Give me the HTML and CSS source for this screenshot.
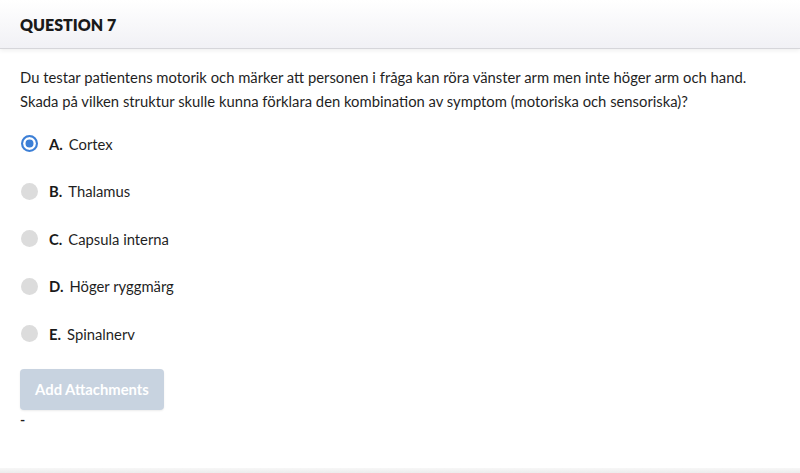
FILE: index.html
```html
<!DOCTYPE html>
<html lang="sv">
<head>
<meta charset="utf-8">
<link rel="stylesheet" href="styles.css">
</head>
<body>
<div class="page">
  <header class="qhead">
    <h1 class="qtitle">QUESTION 7</h1>
  </header>
  <main class="qbody">
    <p class="qtext">Du testar patientens motorik och märker att personen i fråga kan röra vänster arm men inte höger arm och hand.<br>Skada på vilken struktur skulle kunna förklara den kombination av symptom (motoriska och sensoriska)?</p>
    <ul class="options">
      <li class="option selected"><span class="radio"></span><b class="letter">A.</b><span class="otext">Cortex</span></li>
      <li class="option"><span class="radio"></span><b class="letter">B.</b><span class="otext">Thalamus</span></li>
      <li class="option"><span class="radio"></span><b class="letter">C.</b><span class="otext">Capsula interna</span></li>
      <li class="option"><span class="radio"></span><b class="letter">D.</b><span class="otext">Höger ryggmärg</span></li>
      <li class="option"><span class="radio"></span><b class="letter">E.</b><span class="otext">Spinalnerv</span></li>
    </ul>
    <button class="attach" type="button">Add Attachments</button>
    <div class="dash">-</div>
  </main>
  <div class="footer-line"></div>
</div>
</body>
</html>
```

FILE: styles.css
```css
html, body {
  margin: 0;
  padding: 0;
  background: #ffffff;
}
body {
  font-family: Lato, "Open Sans", sans-serif;
  color: #1f1f1f;
}
.page {
  width: 800px;
  height: 473px;
  display: flex;
  flex-direction: column;
  overflow: hidden;
}
.qhead {
  height: 48px;
  flex: none;
  display: flex;
  align-items: center;
  padding: 0 20px;
  background: linear-gradient(to bottom, #ffffff 0%, #f1f1f5 100%);
  border-bottom: 1px solid #d6d6da;
  box-shadow: 0 2px 4px rgba(0,0,0,0.06);
}
.qtitle {
  margin: 0;
  font-size: 16px;
  font-weight: 800;
  color: #1a1a1a;
  letter-spacing: 0;
}
.qbody {
  flex: 1;
  padding: 16px 20px 0;
}
.qtext {
  margin: 0;
  font-size: 14.8px;
  line-height: 24px;
  color: #1f1f1f;
}
.options {
  list-style: none;
  margin: 20px 0 0;
  padding: 0;
  display: flex;
  flex-direction: column;
  gap: 26px;
}
.option {
  display: flex;
  align-items: center;
  height: 21.5px;
  font-size: 14.8px;
}
.radio {
  width: 17px;
  height: 17px;
  border-radius: 50%;
  background: #dcdcdc;
  margin-left: 1px;
  margin-right: 11px;
  box-sizing: border-box;
  flex: none;
}
.option.selected .radio {
  background: #ffffff;
  border: 2.5px solid #3c7fd6;
  box-shadow: inset 0 0 0 2.5px #fff, inset 0 0 0 7px #3c7fd6;
}
.letter {
  font-weight: 700;
  margin-right: 6px;
  color: #1a1a1a;
}
.otext {
  color: #1f1f1f;
}
.attach {
  margin-top: 24px;
  width: 144px;
  height: 41px;
  border: none;
  border-radius: 4px;
  background: #c8d3e0;
  color: #ffffff;
  font-family: Lato, "Open Sans", sans-serif;
  font-weight: 700;
  font-size: 14.8px;
  box-shadow: 0 1px 2px rgba(0,0,0,0.08);
  padding: 0;
}
.dash {
  font-size: 14px;
  font-weight: 700;
  line-height: 16px;
  margin-top: 2px;
  color: #1f1f1f;
}
.footer-line {
  height: 5px;
  flex: none;
  background: linear-gradient(to bottom, #f7f7f7, #ececec);
}
```
